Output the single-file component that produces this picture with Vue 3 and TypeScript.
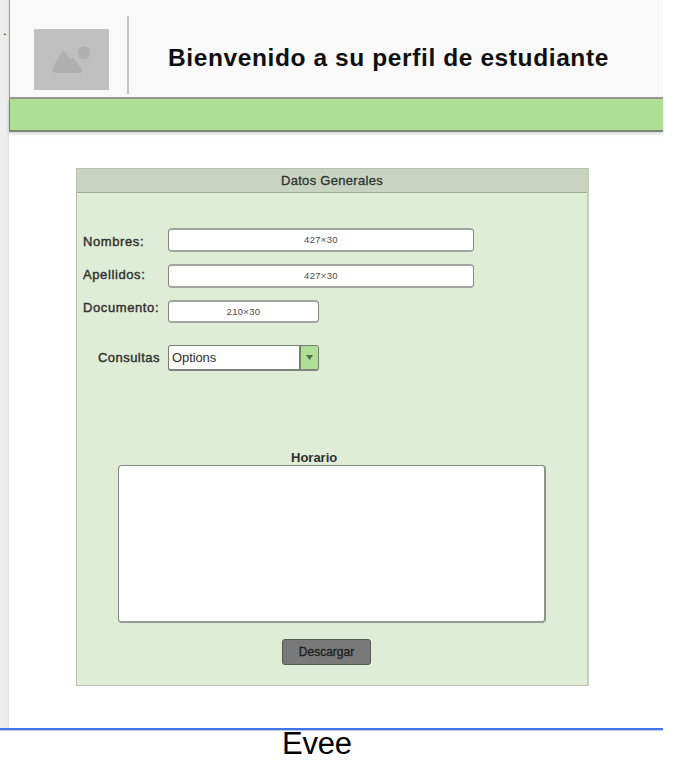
<script setup lang="ts">
interface Field {
  label: string
  hint: string
  kind: string
}

const fields: Field[] = [
  { label: 'Nombres:', hint: '427×30', kind: 'first' },
  { label: 'Apellidos:', hint: '427×30', kind: 'second' },
  { label: 'Documento:', hint: '210×30', kind: 'short' },
]
</script>

<template>
  <main class="page">
    <div class="stage">
      <aside class="gutter">.</aside>
      <section class="screen">
        <header class="header">
          <svg class="logo" viewBox="0 0 75 61" aria-hidden="true">
            <rect width="75" height="61" fill="#c0c0c0" />
            <circle cx="50" cy="23.7" r="6.3" fill="#b0b0b0" />
            <path
              d="M19 38 L26.5 25 Q29.7 19.5 32.9 25 L36 30.5 L37.3 29.6 Q38.7 28.2 40 29.8 L47.5 39.8 Q49.5 43.6 46 43.7 H21 Q17 43.4 19 38 Z"
              fill="#b0b0b0"
            />
          </svg>
          <div class="divider"></div>
          <h1 class="title">Bienvenido a su perfil de estudiante</h1>
        </header>
        <nav class="bar"></nav>
        <section class="panel">
          <h2 class="panel-title">Datos Generales</h2>
          <div class="form">
            <div v-for="f in fields" :key="f.label" class="row" :class="f.kind">
              <label class="label">{{ f.label }}</label>
              <div class="field">{{ f.hint }}</div>
            </div>
            <div class="row consult">
              <label class="label">Consultas</label>
              <div class="select">
                <div class="value">Options</div>
                <div class="arrow">
                  <svg width="7" height="5" viewBox="0 0 7 5"><path d="M0 0H7L3.5 5Z" fill="#5c6b55" /></svg>
                </div>
              </div>
            </div>
          </div>
          <h3 class="caption">Horario</h3>
          <div class="schedule"></div>
          <button class="download" type="button">Descargar</button>
        </section>
      </section>
    </div>
    <footer class="footer">Evee</footer>
  </main>
</template>

<style>
body {
  margin: 0;
  background: #fff;
}
</style>

<style scoped>
.page {
  width: 681px;
  height: 768px;
  background: #fff;
  color: #303030;
  font-family: "Liberation Sans", Arial, sans-serif;
}
.page * {
  box-sizing: border-box;
}
.stage {
  display: flex;
  width: 663px;
  height: 730px;
  border-bottom: 2px solid #3f76ea;
  box-shadow: 0 1px 0 #c3cbe4;
}
.gutter {
  width: 9px;
  padding: 23px 0 0 3px;
  background: linear-gradient(90deg, #ededed 7px, #e0e0e0 9px);
  color: #000;
  font-size: 13px;
  line-height: 15px;
}
.screen {
  flex: 1;
  min-width: 0;
}
.header {
  display: flex;
  height: 99px;
  background: #f9f9f9;
  border-left: 1px solid #9c9c9c;
  border-bottom: 2px solid #969696;
}
.logo {
  width: 75px;
  height: 61px;
  margin: 29px 0 0 24px;
}
.divider {
  width: 2px;
  height: 78px;
  margin: 16px 0 0 18px;
  background: #c1c1c1;
}
.title {
  margin: 43px 0 0 39px;
  color: #101010;
  font-size: 24.5px;
  font-weight: 700;
  line-height: 30px;
  white-space: nowrap;
  letter-spacing: 0.6px;
}
.bar {
  height: 33px;
  background: #aedf94;
  border-left: 1px solid #71895f;
  border-bottom: 2px solid #7b8974;
  box-shadow: 0 2px 3px rgba(0, 0, 0, 0.16);
}
.panel {
  width: 513px;
  height: 518px;
  margin: 36px 0 0 67px;
  background: #dfecd6;
  border: 1px solid #b5c3ae;
  border-right: 2px solid #c5cec0;
}
.panel-title {
  height: 24px;
  margin: 0;
  background: #c8d4bf;
  border-bottom: 1px solid #9cab95;
  font-size: 13px;
  font-weight: 400;
  line-height: 23px;
  text-align: center;
  -webkit-text-stroke: 0.3px #303030;
  letter-spacing: 0.3px;
}
.form {
  height: 257px;
  padding-top: 35px;
}
.row {
  display: flex;
  height: 24px;
  margin-bottom: 12px;
}
.label {
  width: 91px;
  padding: 5px 0 0 6px;
  font-size: 13px;
  line-height: 17px;
  white-space: nowrap;
  -webkit-text-stroke: 0.4px #303030;
  letter-spacing: 0.6px;
}
.second .label {
  padding-top: 2px;
}
.short .label {
  padding-top: 0;
  margin-top: -1px;
}
.field {
  width: 306px;
  height: 24px;
  background: #fff;
  border: 2px solid #a0a59d;
  border-left: 1px solid #858a82;
  border-right: 1px solid #858a82;
  border-radius: 4px;
  color: #4b4b4b;
  font-size: 9.5px;
  line-height: 20px;
  text-align: center;
  letter-spacing: 0.3px;
}
.short .field {
  width: 151px;
  height: 23px;
}
.consult {
  height: 26px;
  margin-top: 21px;
}
.consult .label {
  padding: 4px 0 0 21px;
  letter-spacing: 0.45px;
}
.select {
  display: flex;
  width: 151px;
  height: 26px;
  overflow: hidden;
  background: #fff;
  border: 1px solid #777c74;
  border-bottom: 2px solid #7f837d;
  border-radius: 3px;
}
.value {
  flex: 1;
  padding-left: 3px;
  font-size: 13px;
  line-height: 23px;
  letter-spacing: -0.1px;
}
.arrow {
  display: grid;
  place-items: center;
  width: 19px;
  background: #aedf94;
  border-left: 2px solid #71855f;
}
.caption {
  height: 15px;
  margin: 0 0 0 214px;
  font-size: 13px;
  font-weight: 700;
  line-height: 15px;
}
.schedule {
  width: 428px;
  height: 158px;
  margin: 0 0 0 41px;
  background: #fff;
  border: 1px solid #848982;
  border-right: 2px solid #8f938d;
  border-bottom: 2px solid #959b91;
  border-radius: 4px;
}
.download {
  display: block;
  width: 89px;
  height: 26px;
  margin: 16px 0 0 205px;
  padding: 0;
  background: #797979;
  border: 1px solid #555a53;
  border-radius: 3px;
  color: #1c1c1c;
  font-family: inherit;
  font-size: 12px;
  line-height: 24px;
  -webkit-text-stroke: 0.3px #1c1c1c;
}
.footer {
  height: 28px;
  padding-left: 282px;
  color: #000;
  font-size: 31px;
  line-height: 28px;
  letter-spacing: -0.2px;
}
</style>
